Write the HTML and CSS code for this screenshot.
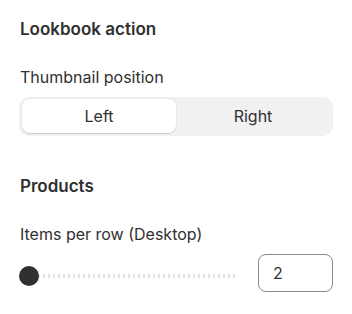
FILE: index.html
```html
<!DOCTYPE html>
<html>
<head>
  <title>Lookbook settings</title>
  <meta name="viewport" content="width=device-width, initial-scale=1.0">
  <link rel="stylesheet" href="styles.css">
</head>
<body>
  <div class="panel">
    <h3 class="section-title">Lookbook action</h3>
    <div class="field">
      <label class="field-label">Thumbnail position</label>
      <div class="segmented">
        <button class="segment active">Left</button>
        <button class="segment">Right</button>
      </div>
    </div>

    <h3 class="section-title products">Products</h3>
    <div class="field">
      <label class="field-label">Items per row (Desktop)</label>
      <div class="range-row">
        <div class="range">
          <div class="range-track"></div>
          <div class="range-thumb"></div>
        </div>
        <input class="range-value" type="text" value="2">
      </div>
    </div>
  </div>
</body>
</html>
```

FILE: styles.css
```css
body {
  margin: 0;
  font-family: Inter, "Noto Sans", sans-serif;
  background-color: #fff;
  color: #303030;
}

.panel {
  padding: 19px 19px 20px 19px;
}

.section-title {
  margin: 0 0 28px 1px;
  font-size: 17px;
  line-height: 20px;
  font-weight: 600;
}

.section-title.products {
  margin-top: 40px;
}

.field-label {
  display: block;
  margin: 0 0 10px 1px;
  font-size: 16px;
  line-height: 20px;
}

.segmented {
  display: flex;
  padding: 2px 3px 3px 3px;
  background-color: #f1f1f1;
  border-radius: 10px;
}

.segment {
  flex: 1;
  height: 34px;
  border: none;
  border-radius: 8px;
  background: transparent;
  font-family: inherit;
  font-size: 16px;
  color: #303030;
  cursor: pointer;
}

.segment.active {
  background-color: #fff;
  box-shadow: 0 1px 1px rgba(0, 0, 0, 0.12), 0 0 0 1px rgba(0, 0, 0, 0.03);
}

.range-row {
  display: flex;
  align-items: center;
  gap: 20px;
}

.range {
  position: relative;
  flex: 1;
  height: 20px;
  margin-top: 6px;
}

.range-track {
  position: absolute;
  left: 14px;
  right: 0;
  top: 8px;
  height: 4px;
  background: repeating-linear-gradient(to right, #e3e3e3 0, #e3e3e3 2px, transparent 2px, transparent 5px);
}

.range-thumb {
  position: absolute;
  left: 0;
  top: 0;
  width: 20px;
  height: 20px;
  border-radius: 50%;
  background-color: #303030;
}

.range-value {
  box-sizing: border-box;
  width: 75px;
  height: 38px;
  padding: 0 14px;
  border: 1px solid #8a8a8a;
  border-radius: 8px;
  font-family: inherit;
  font-size: 16px;
  color: #303030;
}
```
